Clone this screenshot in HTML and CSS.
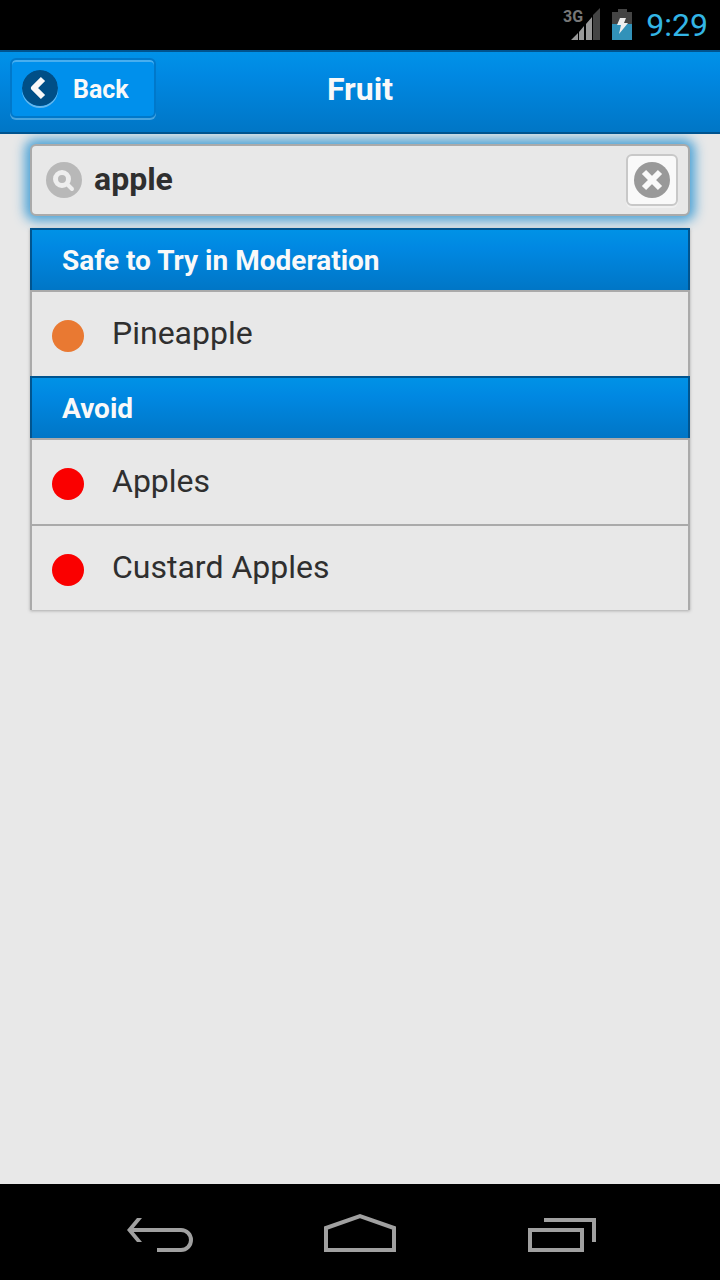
FILE: index.html
```html
<!DOCTYPE html>
<html lang="en">
<head>
<meta charset="utf-8">
<meta name="viewport" content="width=device-width, initial-scale=1">
<title>Fruit</title>
<link rel="stylesheet" href="styles.css">
</head>
<body>
<div class="screen">
  <div class="status">
    <svg class="signal" width="38" height="34" viewBox="0 0 38 34" role="img" aria-label="3G signal">
      <text class="network" x="0" y="15">3G</text>
      <path fill="#999" d="M8 33l7-7v7zM16 25l5-6v14h-5zM23 17l6-7v23h-6z"/>
      <path fill="#444" d="M30 8l7-7v32h-7z"/>
    </svg>
    <svg class="battery" width="20" height="31" viewBox="0 0 20 31" role="img" aria-label="Battery charging">
      <path fill="#444" d="M6 0h9v3h5v12H0V3h6z"/>
      <path fill="#3292b9" d="M0 15h20v16H0z"/>
      <path fill="#eee" d="M8 9h6l-2 5h4L7 25l2-9H5z"/>
    </svg>
    <span class="clock">9:29</span>
  </div>
  <header class="header">
    <button class="back" type="button">
      <svg class="back-icon" width="36" height="36" viewBox="0 0 36 36" aria-hidden="true">
        <circle cx="18" cy="18" r="18" fill="#004f87"/>
        <path fill="none" stroke="#f9f9f9" stroke-width="6" stroke-linejoin="round" d="M21 9L12 18l9 9"/>
      </svg>
      <span class="back-label">Back</span>
    </button>
    <h1 class="title">Fruit</h1>
  </header>
  <main class="content">
    <form class="search">
      <svg width="36" height="36" viewBox="0 0 36 36" aria-hidden="true">
        <circle cx="18" cy="18" r="18" fill="#b8b8b8"/>
        <circle cx="16" cy="17" r="6.5" fill="none" stroke="#eee" stroke-width="5"/>
        <path stroke="#eee" stroke-width="4" stroke-linecap="round" d="M21 22l5 5"/>
      </svg>
      <input class="search-input" type="text" value="apple" aria-label="Filter items">
      <button class="clear" type="reset" aria-label="Clear text">
        <svg width="36" height="36" viewBox="0 0 36 36" aria-hidden="true">
          <circle cx="18" cy="18" r="18" fill="#999"/>
          <path stroke="#f9f9f9" stroke-width="6" d="M10 10l16 16M26 10L10 26"/>
        </svg>
      </button>
    </form>
    <div class="list">
      <h2 class="divider">Safe to Try in Moderation</h2>
      <div class="item"><span class="dot dot-moderate"></span><span class="name">Pineapple</span></div>
      <h2 class="divider">Avoid</h2>
      <div class="item"><span class="dot"></span><span class="name">Apples</span></div>
      <div class="item"><span class="dot"></span><span class="name">Custard Apples</span></div>
    </div>
  </main>
  <nav class="navbar">
    <button class="nav-button" type="button" aria-label="Back">
      <svg width="72" height="40" viewBox="0 0 72 40"><path d="M9 18h50a10 10 0 0 1 0 20H35"/><path class="arrowhead" d="M5 18L15 6h5L10 18l10 12h-5z"/></svg>
    </button>
    <button class="nav-button" type="button" aria-label="Home">
      <svg width="72" height="40" viewBox="0 0 72 40"><path d="M2 38V16L36 4l34 12v22z"/></svg>
    </button>
    <button class="nav-button" type="button" aria-label="Recent apps">
      <svg width="72" height="40" viewBox="0 0 72 40"><path d="M4 18h52v20H4zM18 8h50v22"/></svg>
    </button>
  </nav>
</div>
</body>
</html>
```

FILE: styles.css
```css
* { box-sizing: border-box; }

body {
  margin: 0;
  background: #e8e8e8;
  color: #2f2f2f;
  font-family: Roboto, "Liberation Sans", sans-serif;
}

button, input { font-family: inherit; }

svg { display: block; flex: none; }

.screen {
  min-height: 100vh;
  display: flex;
  flex-direction: column;
}

.status {
  height: 50px;
  padding: 0 12px;
  display: flex;
  align-items: center;
  justify-content: flex-end;
  background: #000;
}

.network {
  fill: #777;
  font-size: 16px;
  font-weight: bold;
}

.signal { margin-bottom: 2px; }

.battery { margin: 0 14px 2px 11px; }

.clock {
  color: #33b5e5;
  font-size: 32px;
  line-height: 52px;
}

.header {
  position: relative;
  z-index: 1;
  padding: 6px 8px 14px;
  display: grid;
  grid-template-columns: 1fr auto 1fr;
  align-items: center;
  border: 2px solid #00548f;
  border-width: 2px 0;
  background: linear-gradient(#0092e8, #0088e2 30%, #0076c6);
}

.header, .divider, .back { color: #f9f9f9; }

.back {
  justify-self: start;
  height: 60px;
  margin-left: 2px;
  padding: 0 24px 0 10px;
  display: flex;
  align-items: center;
  gap: 15px;
  border: 2px solid #0078ca;
  border-radius: 6px;
  background: #0090ec;
  box-shadow: inset 0 2px #48aeef, 0 2px #48a4df;
  font-size: 25px;
  font-weight: bold;
}

.back-label { padding: 2px 1px 0 0; }

.back-icon {
  border-radius: 50%;
  box-shadow: 0 2px #66b7ec;
}

.title {
  margin: 0;
  padding-top: 2px;
  font-size: 32px;
  line-height: 40px;
}

.content {
  flex: 1;
  padding: 10px 30px;
}

.search {
  margin-bottom: 12px;
  padding: 8px 10px 8px 14px;
  display: flex;
  align-items: center;
  border: 2px solid #aaa;
  border-radius: 6px;
  background: #e8e8e8;
  box-shadow: 0 0 12px 5px #4ba2d6;
}

.search-input {
  flex: 1;
  min-width: 0;
  margin-left: 12px;
  padding: 0 0 2px;
  border: 0;
  outline: 0;
  background: none;
  color: inherit;
  font-size: 32px;
  font-weight: bold;
}

.clear {
  padding: 6px;
  border: 2px solid #c8c8c8;
  border-radius: 6px;
  background: #f9f9f9;
  box-shadow: 0 2px #f0f0f0;
}

.list {
  position: relative;
  box-shadow: 0 1px 3px #aaa;
}

.divider {
  height: 62px;
  margin: 0;
  padding: 0 30px;
  border: 2px solid #00548f;
  border-bottom: 0;
  background: linear-gradient(#0092e6, #0088e2 30%, #0076c6);
  font-size: 28px;
  line-height: 62px;
}

.item {
  height: 86px;
  padding: 0 20px;
  display: flex;
  align-items: center;
  gap: 28px;
  border: 2px solid #aaa;
  border-bottom: 0;
  background: #e8e8e8;
}

.dot {
  width: 32px;
  height: 32px;
  margin-top: 4px;
  border-radius: 50%;
  background: #fa0000;
}

.dot-moderate { background: #e97932; }

.name {
  padding-bottom: 2px;
  font-size: 32px;
  line-height: 40px;
}

.navbar {
  height: 96px;
  padding: 0 57px;
  display: flex;
  justify-content: space-around;
  align-items: center;
  background: #000;
}

.nav-button {
  padding: 0;
  border: 0;
  background: none;
}

.nav-button svg {
  fill: none;
  stroke: #a0a0a0;
  stroke-width: 4;
}

.nav-button .arrowhead {
  fill: #a0a0a0;
  stroke: none;
}
```
